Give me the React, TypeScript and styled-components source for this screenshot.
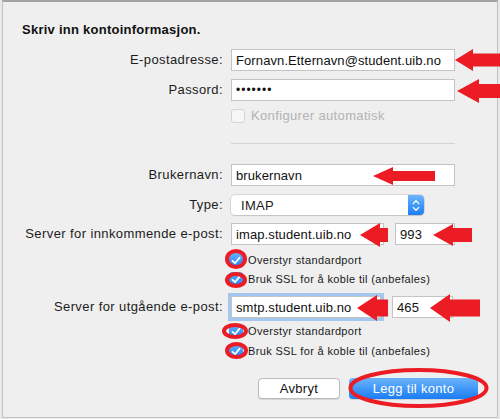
import React from "react";
import styled, { createGlobalStyle } from "styled-components";

const GlobalStyle = createGlobalStyle`
  html, body {
    margin: 0;
    padding: 0;
    background: #e9e9e9;
  }
  * {
    box-sizing: border-box;
  }
`;

const Page = styled.div`
  position: relative;
  width: 500px;
  height: 419px;
  overflow: hidden;
  font-family: "Liberation Sans", Arial, sans-serif;
  color: #1a1a1a;
`;

const Sheet = styled.div`
  margin-left: 2px;
  width: 496px;
  height: 418px;
  background: #efefef;
  border: 1px solid #c2c2c2;
  border-top: 2px solid #a3a3a3;
  display: flex;
  flex-direction: column;
`;

const Title = styled.div`
  margin: 20px 0 0 19px;
  font-size: 13px;
  line-height: 16px;
  font-weight: bold;
  letter-spacing: 0.25px;
  color: #111;
`;

const Field = styled.div<{ $mt: number }>`
  display: grid;
  grid-template-columns: 220px 1fr;
  column-gap: 8px;
  align-items: center;
  margin-top: ${(p) => p.$mt}px;
`;

const Label = styled.div`
  text-align: right;
  font-size: 13px;
  line-height: 16px;
  letter-spacing: 0.4px;
  color: #1c1c1c;
  white-space: nowrap;
`;

const Controls = styled.div`
  display: flex;
  align-items: center;
  gap: 11px;
`;

const TextBox = styled.input<{ $w: number; $focused?: boolean }>`
  width: ${(p) => p.$w}px;
  height: 22px;
  padding: 0 4px;
  border: 1px solid #c4c4c4;
  border-radius: 0;
  background: #fff;
  font-family: "Liberation Sans", Arial, sans-serif;
  font-size: 13px;
  letter-spacing: 0.1px;
  color: #111;
  outline: none;
  box-shadow: ${(p) => (p.$focused ? "0 0 0 3px #a3c7ef" : "none")};
`;

const PasswordBox = styled(TextBox)`
  font-size: 12px;
  letter-spacing: 1px;
`;

const PopUp = styled.div`
  width: 193px;
  height: 20px;
  display: flex;
  align-items: center;
  background: #fff;
  border-radius: 4px;
  box-shadow: 0 0 0 0.5px #bdbdbd, 0 1px 1px rgba(0, 0, 0, 0.15);
  font-size: 13px;
  letter-spacing: 0.3px;
  overflow: hidden;
`;

const PopUpText = styled.span`
  flex: 1;
  padding-left: 10px;
`;

const Stepper = styled.div`
  width: 16px;
  height: 100%;
  display: flex;
  align-items: center;
  justify-content: center;
  background: linear-gradient(#6db4fb, #1c7ef6);
`;

const CheckRow = styled.label<{ $disabled?: boolean }>`
  display: flex;
  align-items: center;
  gap: ${(p) => (p.$disabled ? 6 : 5)}px;
  margin-left: ${(p) => (p.$disabled ? 0 : -2)}px;
  font-size: ${(p) => (p.$disabled ? 13 : 11)}px;
  letter-spacing: ${(p) => (p.$disabled ? 0.35 : 0.35)}px;
  line-height: 16px;
  color: ${(p) => (p.$disabled ? "#b3b3b3" : "#1a1a1a")};
`;

const Box = styled.span<{ $checked?: boolean }>`
  width: 14px;
  height: 14px;
  border-radius: 3px;
  display: flex;
  align-items: center;
  justify-content: center;
  background: ${(p) => (p.$checked ? "linear-gradient(#68b1fb, #1f80f5)" : "#f6f6f6")};
  border: ${(p) => (p.$checked ? "none" : "1px solid #d3d3d3")};
`;

const Separator = styled.div`
  width: 224px;
  height: 1px;
  background: #d2d2d2;
`;

const Buttons = styled.div`
  display: flex;
  justify-content: flex-end;
  gap: 9px;
  padding-right: 19px;
  margin-top: 19px;
`;

const Button = styled.button<{ $primary?: boolean }>`
  height: 21px;
  padding: 0;
  width: ${(p) => (p.$primary ? 129 : 82)}px;
  border-radius: 4px;
  font-family: "Liberation Sans", Arial, sans-serif;
  font-size: 13px;
  letter-spacing: 0.3px;
  color: ${(p) => (p.$primary ? "#fff" : "#111")};
  border: ${(p) => (p.$primary ? "none" : "1px solid #bcbcbc")};
  background: ${(p) =>
    p.$primary ? "linear-gradient(#6cb4fb, #1a7cf4)" : "#fff"};
  box-shadow: 0 1px 1px rgba(0, 0, 0, 0.12);
`;

const Annotations = styled.svg`
  position: absolute;
  left: 0;
  top: 0;
  pointer-events: none;
`;

const Check = () => (
  <svg width="10" height="9" viewBox="0 0 10 9">
    <path d="M1.5 4.8 L4 7.2 L8.6 1.6" fill="none" stroke="#fff" strokeWidth="1.8" strokeLinecap="round" strokeLinejoin="round" />
  </svg>
);

const Checkbox = ({ label, checked, disabled }: { label: string; checked?: boolean; disabled?: boolean }) => (
  <CheckRow $disabled={disabled}>
    <Box $checked={checked}>{checked && <Check />}</Box>
    {label}
  </CheckRow>
);

type ArrowSpec = { x: number; y: number; head: number; len: number; shaft: number; tail: number };

const ARROWS: ArrowSpec[] = [
  { x: 455, y: 60, head: 22, len: 18, shaft: 13, tail: 500 },
  { x: 457, y: 91, head: 24, len: 22, shaft: 14, tail: 500 },
  { x: 373, y: 176, head: 18, len: 20, shaft: 10, tail: 435 },
  { x: 360, y: 235, head: 24, len: 20, shaft: 14, tail: 388 },
  { x: 433, y: 235, head: 22, len: 20, shaft: 14, tail: 472 },
  { x: 357, y: 308, head: 26, len: 20, shaft: 17, tail: 388 },
  { x: 430, y: 308, head: 28, len: 20, shaft: 17, tail: 480 },
];

const RINGS = [
  { cx: 236, cy: 259, rx: 9, ry: 8 },
  { cx: 236, cy: 280, rx: 9, ry: 6 },
  { cx: 235, cy: 331, rx: 11, ry: 6 },
  { cx: 236.5, cy: 350.5, rx: 9.5, ry: 6.5 },
  { cx: 418.5, cy: 388, rx: 68, ry: 18 },
];

const arrowPoints = (a: ArrowSpec) => {
  const b = a.x + a.len;
  return [
    [a.x, a.y],
    [b, a.y - a.head / 2],
    [b, a.y - a.shaft / 2],
    [a.tail, a.y - a.shaft / 2],
    [a.tail, a.y + a.shaft / 2],
    [b, a.y + a.shaft / 2],
    [b, a.y + a.head / 2],
  ]
    .map((p) => p.join(","))
    .join(" ");
};

export default function App() {
  return (
    <Page>
      <GlobalStyle />
      <Sheet>
        <Title>Skriv inn kontoinformasjon.</Title>

        <Field $mt={11}>
          <Label>E-postadresse:</Label>
          <TextBox $w={224} readOnly defaultValue="Fornavn.Etternavn@student.uib.no" />
        </Field>
        <Field $mt={8}>
          <Label>Passord:</Label>
          <PasswordBox $w={224} type="password" readOnly defaultValue="1234567" />
        </Field>
        <Field $mt={7}>
          <span />
          <Checkbox label="Konfigurer automatisk" disabled />
        </Field>
        <Field $mt={19}>
          <span />
          <Separator />
        </Field>

        <Field $mt={20}>
          <Label>Brukernavn:</Label>
          <TextBox $w={224} readOnly defaultValue="brukernavn" />
        </Field>
        <Field $mt={9}>
          <Label>Type:</Label>
          <PopUp>
            <PopUpText>IMAP</PopUpText>
            <Stepper>
              <svg width="8" height="13" viewBox="0 0 8 13">
                <path d="M1.2 4.6 L4 1.8 L6.8 4.6 M1.2 8.4 L4 11.2 L6.8 8.4" fill="none" stroke="#fff" strokeWidth="1.3" strokeLinecap="round" strokeLinejoin="round" />
              </svg>
            </Stepper>
          </PopUp>
        </Field>
        <Field $mt={8}>
          <Label>Server for innkommende e-post:</Label>
          <Controls>
            <TextBox $w={153} readOnly defaultValue="imap.student.uib.no" />
            <TextBox $w={60} readOnly defaultValue="993" />
          </Controls>
        </Field>
        <Field $mt={7}>
          <span />
          <Checkbox label="Overstyr standardport" checked />
        </Field>
        <Field $mt={3}>
          <span />
          <Checkbox label="Bruk SSL for å koble til (anbefales)" checked />
        </Field>

        <Field $mt={9}>
          <Label>Server for utgående e-post:</Label>
          <Controls>
            <TextBox $w={150} $focused readOnly defaultValue="smtp.student.uib.no" />
            <TextBox $w={61} readOnly defaultValue="465" />
          </Controls>
        </Field>
        <Field $mt={5}>
          <span />
          <Checkbox label="Overstyr standardport" checked />
        </Field>
        <Field $mt={4}>
          <span />
          <Checkbox label="Bruk SSL for å koble til (anbefales)" checked />
        </Field>

        <Buttons>
          <Button>Avbryt</Button>
          <Button $primary>Legg til konto</Button>
        </Buttons>
      </Sheet>

      <Annotations width="500" height="419" viewBox="0 0 500 419">
        {ARROWS.map((a, i) => (
          <polygon key={i} points={arrowPoints(a)} fill="#ec1c24" />
        ))}
        {RINGS.map((r, i) => (
          <ellipse key={i} cx={r.cx} cy={r.cy} rx={r.rx} ry={r.ry} fill="none" stroke="#ec1c24" strokeWidth="4" />
        ))}
      </Annotations>
    </Page>
  );
}
